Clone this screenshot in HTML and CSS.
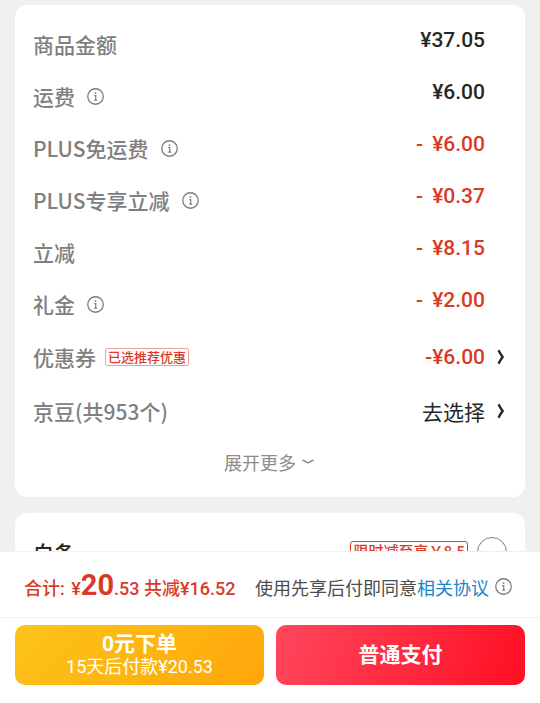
FILE: index.html
```
<!DOCTYPE html>
<html lang="zh-CN">

<head>
    <meta charset="UTF-8">
    <meta name="viewport" content="width=device-width, initial-scale=1.0">
    <title>确认订单</title>
    <link rel="stylesheet" href="styles.css">
</head>

<body>
    <!-- Shared icons -->
    <svg class="icon-defs" aria-hidden="true">
        <symbol id="icon-info" viewBox="0 0 16 16">
            <circle cx="8" cy="8" r="7.3" fill="none" stroke="currentColor" stroke-width="1.2" />
            <circle cx="8" cy="4.8" r="0.9" fill="currentColor" />
            <path d="M6.8 7.2H8.2V11.4M6.8 11.4H9.6" fill="none" stroke="currentColor" stroke-width="1.1" />
        </symbol>
        <symbol id="icon-right" viewBox="0 0 8 16">
            <path d="M1.5 1.2Q3.4 5 5.6 8Q3.4 11 1.5 14.8" fill="none" stroke="currentColor" stroke-width="2.4" />
        </symbol>
        <symbol id="icon-down" viewBox="0 0 12 8">
            <path d="M0.5 2Q3.5 3.4 6 5Q8.5 3.4 11.5 2" fill="none" stroke="currentColor" stroke-width="1.4" />
        </symbol>
    </svg>

    <main class="content">
        <section class="card">
            <div class="row">
                <span class="label">商品金额</span>
                <span class="amount">¥37.05</span>
            </div>
            <div class="row">
                <span class="label">运费</span>
                <button class="info" type="button" aria-label="运费"><svg><use href="#icon-info" /></svg></button>
                <span class="amount">¥6.00</span>
            </div>
            <div class="row">
                <span class="label">PLUS免运费</span>
                <button class="info" type="button" aria-label="PLUS免运费"><svg><use href="#icon-info" /></svg></button>
                <span class="amount red"><span class="minus">-</span>¥6.00</span>
            </div>
            <div class="row">
                <span class="label">PLUS专享立减</span>
                <button class="info" type="button" aria-label="PLUS专享立减"><svg><use href="#icon-info" /></svg></button>
                <span class="amount red"><span class="minus">-</span>¥0.37</span>
            </div>
            <div class="row">
                <span class="label">立减</span>
                <span class="amount red"><span class="minus">-</span>¥8.15</span>
            </div>
            <div class="row">
                <span class="label">礼金</span>
                <button class="info" type="button" aria-label="礼金"><svg><use href="#icon-info" /></svg></button>
                <span class="amount red"><span class="minus">-</span>¥2.00</span>
            </div>
            <div class="row row-select">
                <span class="label">优惠券</span>
                <span class="tag">已选推荐优惠</span>
                <button class="select red" type="button">-¥6.00<svg><use href="#icon-right" /></svg></button>
            </div>
            <div class="row row-select">
                <span class="label">京豆(共953个)</span>
                <button class="select" type="button">去选择<svg><use href="#icon-right" /></svg></button>
            </div>
            <button class="more" type="button">展开更多<svg><use href="#icon-down" /></svg></button>
        </section>

        <section class="card">
            <div class="row">
                <label class="pay-name" for="baitiao">白条</label>
                <span class="promo">限时减至享￥8.5</span>
                <input class="pay-radio" type="radio" id="baitiao" name="payment">
            </div>
        </section>
    </main>

    <footer class="checkout">
        <div class="summary">
            <p class="total">合计: <span class="currency">¥</span><strong>20</strong>.53 共减¥16.52</p>
            <p class="agreement">使用先享后付即同意<a href="#">相关协议</a></p>
            <button class="info" type="button" aria-label="先享后付"><svg><use href="#icon-info" /></svg></button>
        </div>
        <div class="buttons">
            <button class="btn btn-yellow" type="button">
                <span class="btn-title">0元下单</span>
                <span class="btn-note">15天后付款¥20.53</span>
            </button>
            <button class="btn btn-red" type="button">
                <span class="btn-title">普通支付</span>
            </button>
        </div>
    </footer>
</body>

</html>
```

FILE: styles.css
```
* {
    box-sizing: border-box;
}

body {
    margin: 0;
    height: 100vh;
    display: flex;
    flex-direction: column;
    background-color: #f0f0f0;
    color: #262626;
    font-family: "Noto Sans CJK SC", sans-serif;
    font-size: 21px;
}

button {
    border: none;
    padding: 0;
    background: none;
    color: inherit;
    font: inherit;
    cursor: pointer;
}

p {
    margin: 0;
}

.icon-defs {
    display: none;
}

.content {
    flex: 1;
    min-height: 0;
    overflow: hidden;
    padding: 5px 15px 0;
}

.card {
    background-color: #fff;
    border-radius: 12px;
    padding: 13px 20px 11px 18px;
    margin-bottom: 16px;
}

/* Price rows */
.row {
    display: flex;
    align-items: center;
    height: 52px;
}

.row-select {
    height: 54px;
}

.label {
    color: #808080;
    font-weight: 500;
}

.info {
    display: flex;
    margin-left: 12px;
    color: #7c7c7c;
}

.info svg {
    width: 17px;
    height: 17px;
}

.amount {
    margin-left: auto;
    padding-right: 20px;
    padding-bottom: 8px;
    font-family: Roboto, "Noto Sans CJK SC", sans-serif;
    font-weight: 500;
}

.red {
    color: #d93a28;
}

.minus {
    margin-right: 9px;
}

.tag {
    margin-left: 9px;
    padding: 0 2px;
    border: 1px solid #efa198;
    border-radius: 2px;
    color: #d93a28;
    font-size: 13px;
    font-weight: 500;
    line-height: 16px;
}

.select {
    display: flex;
    align-items: center;
    gap: 12px;
    margin-left: auto;
    font-family: Roboto, "Noto Sans CJK SC", sans-serif;
}

.select svg {
    width: 8px;
    height: 16px;
    color: #262626;
}

.select.red {
    font-weight: 500;
}

.more {
    display: flex;
    align-items: center;
    gap: 6px;
    height: 48px;
    margin: 0 auto;
    color: #8c8c8c;
    font-size: 18px;
}

.more svg {
    width: 12px;
    height: 8px;
}

/* Payment method */
.pay-name {
    font-weight: 500;
}

.promo {
    margin-left: auto;
    padding: 0 2px 2px;
    border: 1px solid #d93a28;
    border-radius: 3px;
    color: #d93a28;
    font-size: 15px;
    font-weight: 500;
    line-height: 18px;
}

.pay-radio {
    appearance: none;
    width: 30px;
    height: 30px;
    margin: 0 -2px 0 9px;
    border: 1px solid #7c7c7c;
    border-radius: 50%;
}

/* Bottom bar */
.checkout {
    background-color: #fff;
    border-top: 1px solid #f0f0f0;
    font-family: Roboto, "Noto Sans CJK SC", sans-serif;
    font-size: 18px;
}

.summary {
    display: flex;
    align-items: center;
    height: 66px;
    padding: 4px 28px 0 24px;
    border-bottom: 1px solid #f0f0f0;
    white-space: nowrap;
}

.total {
    color: #d93a28;
    font-weight: 500;
    line-height: 26px;
}

.total strong {
    font-size: 29px;
    font-weight: 700;
}

.currency {
    margin-left: 2px;
}

.agreement {
    margin-left: auto;
    color: #4c4c4c;
}

.agreement a {
    color: #2186c8;
    text-decoration: none;
}

.summary .info {
    margin: 0 0 0 6px;
}

.buttons {
    display: flex;
    gap: 12px;
    padding: 7px 15px 18px;
}

.btn {
    flex: 1;
    display: flex;
    flex-direction: column;
    align-items: center;
    justify-content: center;
    height: 60px;
    border-radius: 10px;
    color: #fff;
}

.btn-yellow {
    background: linear-gradient(135deg, #fcc419, #ffa60a);
}

.btn-red {
    background: linear-gradient(110deg, #ff475d, #ff0f23);
}

.btn-title {
    font-size: 21px;
    font-weight: 700;
    line-height: 24px;
}

.btn-note {
    font-size: 18px;
    line-height: 22px;
}
```
